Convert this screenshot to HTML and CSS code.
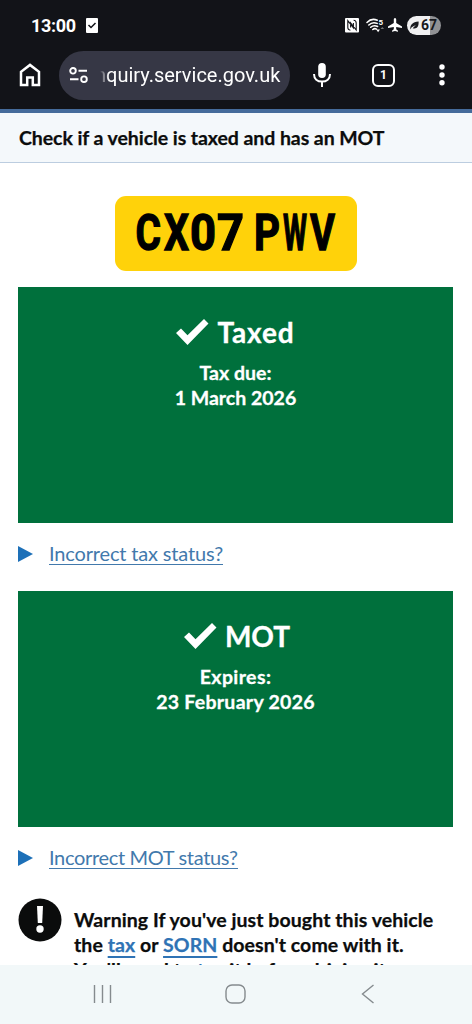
FILE: index.html
```html
<!DOCTYPE html>
<html lang="en">
<head>
<meta charset="utf-8">
<title>Check if a vehicle is taxed and has an MOT</title>
<link rel="stylesheet" href="styles.css">
</head>
<body>
<div class="phone">
  <header class="chrome">
    <div class="status">
      <span class="clock">13:00</span>
      <svg class="task" width="12" height="15" viewBox="0 0 12 15"><rect width="12" height="15" rx="1" fill="#fff"/><path d="M2.5 7l2.5 2.5L9.5 5" fill="none" stroke="#121318" stroke-width="1.5"/></svg>
      <div class="indicators">
        <svg width="14" height="15" viewBox="0 0 14 15"><rect width="14" height="14.5" rx="1" fill="#fff"/><path d="M5.4 12.2C3.4 12 2.8 11.4 2.8 9.6V2.6L8.4 9.8V5M8.6 2.3c2 .2 2.6.8 2.6 2.6V12L5.6 4.8v4.7" fill="none" stroke="#121318" stroke-width="1.1"/></svg>
        <svg width="19" height="15" viewBox="0 0 19 15"><g fill="none" stroke="#fff" stroke-width="1.5" stroke-linecap="round"><path d="M1 4.5C4 1.3 8 .8 11.3 2.3M2.8 7c2.3-2.3 5.5-2.9 8.4-1.6M4.7 9.3c2-1.8 4.6-2 6.9-.8M6.8 11.5c1.2-1 2.5-1.1 3.7-.4"/></g><text class="wifi-gen" x="12.5" y="7">5</text><path d="M10.2 11.5h3.8l-1.9 2.7z" fill="#fff"/><path d="M14.5 11l1.8-2 1.8 2z" fill="#777"/></svg>
        <svg width="14" height="14" viewBox="0 0 14 14"><path d="M7 0c.8 0 1.2.8 1.2 1.6v3.3L14 8.6V10L8.2 8.9v2.4l1.8 1.4v1L7 13l-3 .7v-1l1.8-1.4V8.9L0 10V8.6l5.8-3.7V1.6C5.8.8 6.2 0 7 0z" fill="#fff"/></svg>
        <span class="battery"><svg width="9" height="9" viewBox="0 0 9 9"><path d="M.3 8.5C0 4 2.5 1 8.6.6 9 6 6.4 8.4 2.7 7.2L5.8 4 1.7 6.3z" fill="#18191d"/></svg>67</span>
      </div>
    </div>
    <div class="toolbar">
      <svg class="home" width="22" height="24" viewBox="0 0 22 24"><path d="M2 22V8.8l9-6.9 9 6.9V22h-6.2v-7.4H8.2V22z" fill="none" stroke="#fff" stroke-width="2.5"/></svg>
      <div class="address">
        <svg width="20" height="16" viewBox="0 0 20 16"><g fill="none" stroke="#fff" stroke-width="1.9"><circle cx="4" cy="3.8" r="2.8"/><path d="M9.5 3.8H18M1 12.3h8.5"/><circle cx="15" cy="12.2" r="2.8"/></g></svg>
        <div class="url"><span>nquiry.service.gov.uk</span></div>
      </div>
      <svg class="mic" width="18" height="24" viewBox="0 0 18 24"><rect x="5.2" y="0" width="7.6" height="15" rx="3.8" fill="#fff"/><path d="M1 11c0 5 3.4 7.6 8 7.6s8-2.6 8-7.6M9 18.5V24" fill="none" stroke="#fff" stroke-width="2"/></svg>
      <span class="tabs">1</span>
      <svg class="dots" width="6" height="22" viewBox="0 0 6 22"><g fill="#fff"><circle cx="3" cy="3" r="2.7"/><circle cx="3" cy="11" r="2.7"/><circle cx="3" cy="18.8" r="2.7"/></g></svg>
    </div>
  </header>
  <div class="service"><span>Check if a vehicle is taxed and has an MOT</span></div>
  <main class="content">
    <div class="plate">
      <svg width="242" height="75" viewBox="0 0 242 75"><text class="reg" y="54.3"><tspan x="20.5" textLength="25.5" lengthAdjust="spacingAndGlyphs">C</tspan><tspan x="49" textLength="25" lengthAdjust="spacingAndGlyphs">X</tspan><tspan x="75" textLength="26" lengthAdjust="spacingAndGlyphs">0</tspan><tspan x="102" textLength="27" lengthAdjust="spacingAndGlyphs">7</tspan> <tspan x="139" textLength="26" lengthAdjust="spacingAndGlyphs">P</tspan><tspan x="168" textLength="24" lengthAdjust="spacingAndGlyphs">W</tspan><tspan x="195" textLength="25" lengthAdjust="spacingAndGlyphs">V</tspan></text></svg>
    </div>
    <section class="panel">
      <h2><svg width="33" height="26" viewBox="0 0 33 26"><path d="M0 14l5-4.5 6.5 6.7L28 0l4.5 4.5L11.5 26z" fill="#fff"/></svg><span class="t-taxed">Taxed</span></h2>
      <p><span class="t-due">Tax due:</span><br><span class="t-date1">1 March 2026</span></p>
    </section>
    <div class="details"><i></i><a class="l-tax">Incorrect tax status?</a></div>
    <section class="panel">
      <h2><svg width="33" height="26" viewBox="0 0 33 26"><path d="M0 14l5-4.5 6.5 6.7L28 0l4.5 4.5L11.5 26z" fill="#fff"/></svg><span class="t-mot">MOT</span></h2>
      <p><span class="t-exp">Expires:</span><br><span class="t-date2">23 February 2026</span></p>
    </section>
    <div class="details"><i></i><a class="l-mot">Incorrect MOT status?</a></div>
    <div class="warning">
      <svg width="44" height="44" viewBox="0 0 44 44"><circle cx="22" cy="22" r="21.5" fill="#0b0c0c"/><path d="M19 8h6l-.8 17h-4.4z" fill="#fff"/><circle cx="22" cy="31" r="3.7" fill="#fff"/></svg>
      <p><span class="w1">Warning If you've just bought this vehicle</span><br><span class="w2">the <a>tax</a> or <a>SORN</a> doesn't come with it.</span><br><span class="w3">You'll need to <a>tax</a> it before driving it.</span></p>
    </div>
  </main>
  <nav class="navbar">
    <svg width="20" height="20" viewBox="0 0 20 20"><path d="M1.5 1v18M9.5 1v18M17.5 1v18" stroke="#858b8e" stroke-width="1.4"/></svg>
    <svg class="nav-home" width="22" height="20" viewBox="0 0 22 20"><rect x="1" y="1" width="19" height="18" rx="6" fill="none" stroke="#858b8e" stroke-width="1.4"/></svg>
    <svg width="14" height="20" viewBox="0 0 14 20"><path d="M12.5 1L1.5 10l11 9" fill="none" stroke="#858b8e" stroke-width="1.4"/></svg>
  </nav>
</div>
</body>
</html>
```
FILE: styles.css
```css
* { box-sizing: border-box; }
body { margin: 0; background: #fff; font-family: Lato, "Noto Sans", sans-serif; color: #0b0c0c; }
svg { display: block; flex: none; }
h2, p { margin: 0; }
span { white-space: nowrap; }

.phone { display: flex; flex-direction: column; width: 472px; height: 1024px; overflow: hidden; }
.chrome { flex: none; height: 109px; background: #121318; color: #fff; font-family: Roboto, sans-serif; }
.status { display: flex; align-items: center; height: 50px; padding: 0 31px; }
.clock { font-size: 18px; font-weight: 700; letter-spacing: -.3px; width: 55px; }
.indicators { display: flex; align-items: center; gap: 7px; margin-left: auto; }
.indicators svg:nth-child(3) { margin-left: -4px; }
.wifi-gen { font: 700 8px Roboto, sans-serif; fill: #fff; }
.battery { display: flex; align-items: center; gap: 2px; width: 34px; height: 19px; padding-left: 3px; margin-left: -2px; border-radius: 10px; background: linear-gradient(90deg, #f0f0f1 67%, #909194 67%); color: #18191d; font-size: 14px; font-weight: 700; line-height: 19px; }
.toolbar { display: flex; align-items: center; height: 50px; padding-left: 19px; }
.address { display: flex; align-items: center; width: 231px; height: 49px; margin-left: 18px; padding-left: 10px; border-radius: 25px; background: #363745; }
.url { width: 211px; margin-left: 11px; overflow: hidden; font-size: 20px; -webkit-mask-image: linear-gradient(90deg, transparent, #000 9px); mask-image: linear-gradient(90deg, transparent, #000 9px); }
.url span { margin-left: -5px; }
.mic { margin-left: 23px; }
.tabs { width: 23px; height: 23px; margin-left: 41px; border: 2.5px solid #fff; border-radius: 6px; font-size: 12px; font-weight: 700; line-height: 18px; text-align: center; }
.dots { margin-left: 44px; }

.service { flex: none; height: 54px; padding: 0 19px; border-top: 4px solid #456b9b; border-bottom: 1px solid #bccde0; background: #f4f8fb; font-size: 19.5px; font-weight: 700; line-height: 49px; letter-spacing: -.07px; -webkit-text-stroke: .25px; }

.content { flex: 1; min-height: 0; overflow: hidden; padding: 33px 19px 0 18px; }
.plate { width: 242px; height: 75px; margin: 0 auto 16px 97px; border-radius: 11px; background: #ffd20a; }
.reg { font: 700 49.5px Roboto, sans-serif; fill: #000; stroke: #000; stroke-width: 1.3px; }
.panel { height: 236px; padding-top: 27px; background: #00703c; color: #fff; text-align: center; -webkit-text-stroke: .3px; }
.panel h2 { display: flex; align-items: center; justify-content: center; gap: 8px; height: 37px; font-size: 28px; line-height: 37px; }
.panel h2 svg { margin-top: -2px; }
.t-taxed { letter-spacing: .9px; }
.t-mot { margin-right: -3px; }
.panel p { padding-top: 9px; font-size: 19.5px; font-weight: 700; line-height: 25px; }
.t-exp { letter-spacing: .4px; }
.t-date2 { letter-spacing: .28px; }
.details { display: flex; align-items: center; height: 68px; padding-bottom: 7px; font-size: 20px; }
.details i { border: 8px solid transparent; border-left: 15px solid #1d70b8; border-right: 0; margin-right: 16px; }
.details a { color: #4279ac; line-height: 22px; border-bottom: 1px solid #4279ac; white-space: nowrap; }
.l-tax { letter-spacing: -.16px; }
.l-mot { letter-spacing: -.33px; }
.warning { display: flex; gap: 12px; padding-top: 3px; -webkit-text-stroke: .25px; }
.warning p { padding-top: 9px; font-size: 19.5px; font-weight: 700; line-height: 25px; letter-spacing: .07px; }
.warning a { color: #2f73b5; text-decoration: underline; text-decoration-thickness: 1.5px; text-underline-offset: 4px; }

.navbar { flex: none; display: flex; height: 59px; padding: 19px 97px 0 93px; justify-content: space-between; background: #f2f8f9; }
.nav-home { margin-right: 2px; }
```
